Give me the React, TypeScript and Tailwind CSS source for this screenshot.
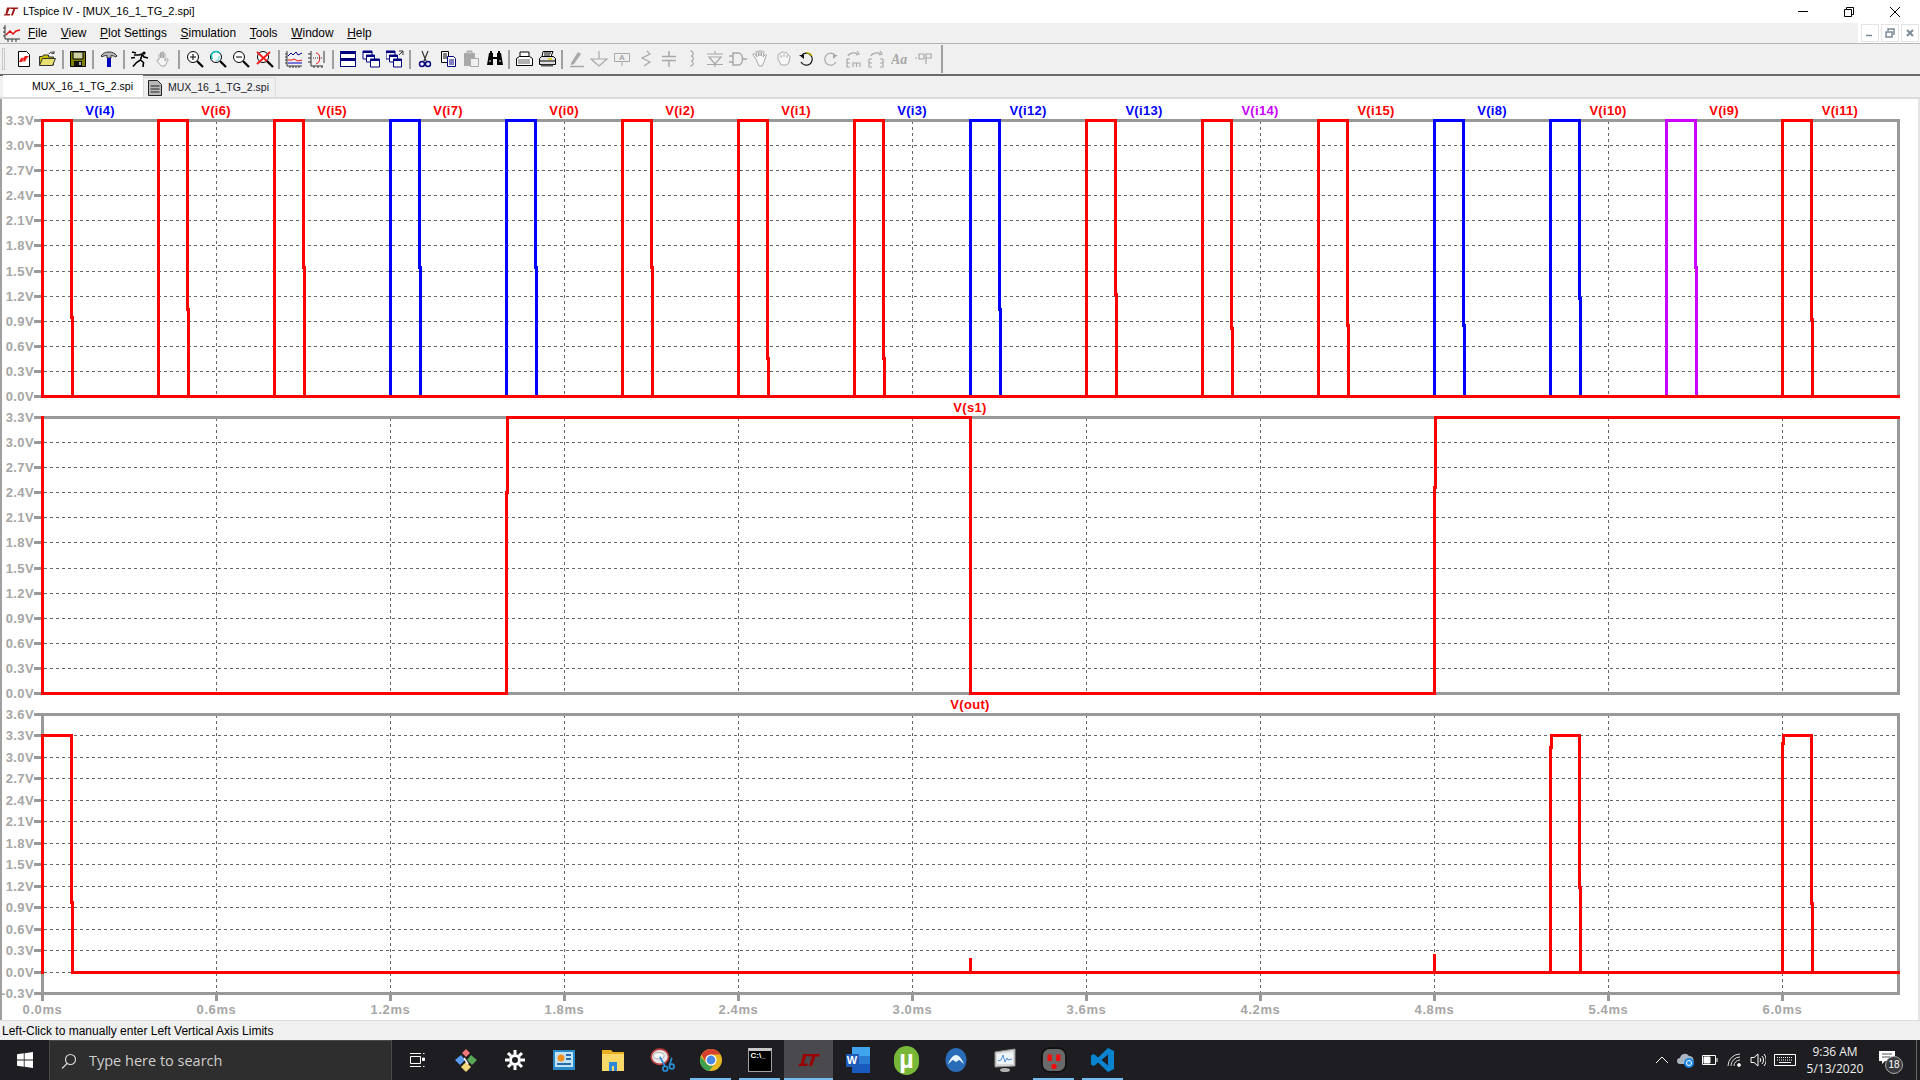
import type { ReactNode } from "react";

const NAVY = "#000080";
const GREY = "#a6a6a6";
const AXIS = "#999999";
const RED = "#ff0000";
const BLUE = "#0000ff";
const MAGENTA = "#cc00ff";

const X0 = 42.5;
const PERIOD = 116;

const pulses = [
  { color: RED, kink: 317 },
  { color: RED, kink: 309 },
  { color: RED, kink: 267 },
  { color: BLUE, kink: 267 },
  { color: BLUE, kink: 267 },
  { color: RED, kink: 267 },
  { color: RED, kink: 358 },
  { color: RED, kink: 358 },
  { color: BLUE, kink: 309 },
  { color: RED, kink: 294 },
  { color: RED, kink: 328 },
  { color: RED, kink: 325 },
  { color: BLUE, kink: 325 },
  { color: BLUE, kink: 298 },
  { color: MAGENTA, kink: 267 },
  { color: RED, kink: 319 },
];

const topLabels = [
  { text: "V(i4)", color: BLUE },
  { text: "V(i6)", color: RED },
  { text: "V(i5)", color: RED },
  { text: "V(i7)", color: RED },
  { text: "V(i0)", color: RED },
  { text: "V(i2)", color: RED },
  { text: "V(i1)", color: RED },
  { text: "V(i3)", color: BLUE },
  { text: "V(i12)", color: BLUE },
  { text: "V(i13)", color: BLUE },
  { text: "V(i14)", color: MAGENTA },
  { text: "V(i15)", color: RED },
  { text: "V(i8)", color: BLUE },
  { text: "V(i10)", color: RED },
  { text: "V(i9)", color: RED },
  { text: "V(i11)", color: RED },
];

const panels = [
  { top: 120.5, bottom: 396.5, steps: 11, max: 3.3 },
  { top: 417.5, bottom: 693.5, steps: 11, max: 3.3 },
  { top: 714.5, bottom: 993.5, steps: 13, max: 3.6 },
];

const menus = [
  ["F", "ile"],
  ["V", "iew"],
  ["P", "lot Settings"],
  ["S", "imulation"],
  ["T", "ools"],
  ["W", "indow"],
  ["H", "elp"],
];

const Ico = ({ children }: { children: ReactNode }) => (
  <svg viewBox="0 0 18 18" fill="none" className="w-[18px] h-[18px]" strokeWidth="1">
    {children}
  </svg>
);

const Lens = ({ children }: { children?: ReactNode }) => (
  <Ico>
    <circle cx="7" cy="7" r="5.5" fill="#fff" stroke="#000" />
    {children}
    <path d="M11 11l6 6" stroke="#000" strokeWidth="2.2" />
  </Ico>
);

const LtMark = ({ fill }: { fill: string }) => (
  <path
    d="M5 1h5l-.6 1.5H8L5.5 9H9L8.5 11H1l.5-1.5 1.5-.2zM10 1h9l-.6 2h-3L12.5 11h-2.6l2.9-8h-3.3z"
    fill={fill}
  />
);

const group1: ReactNode[] = [
  <Ico key="new">
    <path d="M3.5 1.5h8l3 3v12h-11z" fill="#fff" stroke="#000" />
    <path d="M4 12l2-4 2-.5-1 2 3-3.5h4l-2 2-2 3.5h-2l1-3-2 3.5z" fill="#f01818" />
  </Ico>,
  <Ico key="open">
    <path d="M1.5 6.5h3l1-1.5h5v2h5v8h-14z" fill="#c8c000" stroke="#333" />
    <path d="M1.5 15.5l3-7h13l-3 7z" fill="#e8e070" stroke="#333" />
    <path d="M11 4c1-2 3-2.500 4.500-1.500M16 1v2.500h-2.500" stroke="#333" />
  </Ico>,
];

const group2: ReactNode[] = [
  <Ico key="save">
    <path d="M1.500 1.500h15v15h-15z" fill="#808000" stroke="#000" />
    <path d="M4 2h10v7H4z" fill="#d0d0a0" stroke="#000" />
    <path d="M5 11h8v5H5z" fill="#111" />
    <path d="M10 12h2v3h-2z" fill="#b0b0b0" />
  </Ico>,
];

const group3: ReactNode[] = [
  <Ico key="hammer">
    <path d="M1 6c2-3 5-4 8-4s6 1 8 4l-1 1c-2-1-4-1.500-5-1.500V8H7V5.500C5 5.500 3 6 2 7z" fill="#b8b8b8" stroke="#333" />
    <path d="M7 8h4v9H7z" fill="#0000c0" />
  </Ico>,
];

const group4: ReactNode[] = [
  <Ico key="run">
    <circle cx="13" cy="3" r="1.600" fill="#000" />
    <path d="M3 5h5l3-1 2 3 4 1M11 5l-1.500 5-4 2.500-3.500 4M9.500 10l3 2.500-.5 4.500M1 2l4 1M0 8l4-.5" stroke="#000" strokeWidth="1.600" />
  </Ico>,
  <Ico key="hand">
    <path d="M5 10V5c0-1 1.500-1 1.500 0v3-5c0-1 1.500-1 1.500 0v5-5.500c0-1 1.500-1 1.500 0V8V4c0-1 1.500-1 1.500 0v7l1.500-2c1-1 2 0 1.500 1l-3 6H7l-4-5c-.5-1 .5-2 1.500-1z" fill="#f4f4f4" stroke="#a8a8a8" />
  </Ico>,
];

const group5: ReactNode[] = [
  <Lens key="zin">
    <path d="M4 7h6M7 4v6" stroke="#000" />
  </Lens>,
  <Lens key="zfit">
    <path d="M3.500 9a4.500 4.500 0 0 1 7-6" stroke="#00c8c8" strokeWidth="1.500" />
    <path d="M10 6a4 4 0 0 1-3 5" stroke="#80e0e0" strokeWidth="1.500" />
  </Lens>,
  <Lens key="zout">
    <path d="M4 7h6" stroke="#000" />
  </Lens>,
  <Lens key="zcancel">
    <path d="M1 2l13 12M14 2L1 14" stroke="#f01818" strokeWidth="1.800" />
  </Lens>,
];

const group6: ReactNode[] = [
  <Ico key="plot">
    <path d="M2 1v15h15M0 4h2M0 7h2M0 10h2M0 13h2M5 16v2M8 16v2M11 16v2M14 16v2" stroke="#333" />
    <path d="M3 6l3-3 2 2 3-3 2 3 4-2" stroke={NAVY} />
    <path d="M3 10h4l2-1 4 2 4-1" stroke="#e01010" />
    <path d="M3 13h14" stroke="#0000c0" />
  </Ico>,
  <Ico key="curve">
    <path d="M3 1v15h12M0 4h3M0 8h3M0 12h3M6 16v2M10 16v2M14 16v2M16 1v12" stroke="#333" />
    <path d="M8 3c5 0 5 10 0 11" stroke="#e01010" />
    <path d="M5 8h9" stroke="#333" strokeDasharray="1 1" />
  </Ico>,
];

const group7: ReactNode[] = [
  <Ico key="tile">
    <path d="M1 1h16v16H1z" fill={NAVY} />
    <path d="M2 4h14v4H2zM2 11h14v5H2z" fill="#fff" />
  </Ico>,
  <Ico key="cascade">
    <path d="M1 1h9v8H1z" fill="#fff" stroke={NAVY} />
    <path d="M1 1h9v2H1z" fill={NAVY} />
    <path d="M4.500 5h8v7h-8z" fill="#fff" stroke={NAVY} />
    <path d="M4.500 5h8v2h-8z" fill={NAVY} />
    <path d="M8.500 9h9v8h-9z" fill="#fff" stroke={NAVY} />
    <path d="M8.500 9h9v2h-9z" fill={NAVY} />
  </Ico>,
  <Ico key="cascade2">
    <path d="M0 1h9v8H0z" fill="#fff" stroke={NAVY} />
    <path d="M0 1h9v2H0z" fill={NAVY} />
    <path d="M3.500 5h8v7h-8z" fill="#fff" stroke={NAVY} />
    <path d="M3.500 5h8v2h-8z" fill={NAVY} />
    <path d="M7.500 9h8v8h-8z" fill="#fff" stroke={NAVY} />
    <path d="M7.500 9h8v2h-8z" fill={NAVY} />
    <path d="M13 1h4v4M17 1l-4 4" stroke="#333" />
  </Ico>,
];

const group8: ReactNode[] = [
  <Ico key="cut">
    <path d="M6 1l4 10M12 1L8 11" stroke="#333" strokeWidth="1.200" />
    <circle cx="6" cy="14" r="2.500" stroke={NAVY} strokeWidth="1.400" />
    <circle cx="12" cy="14" r="2.500" stroke={NAVY} strokeWidth="1.400" />
  </Ico>,
  <Ico key="copy">
    <path d="M2.500 1.500h7v11h-7z" fill="#fff" stroke="#000" />
    <path d="M4 4h4M4 6h4M4 8h4" stroke="#000" />
    <path d="M8.500 6.500h6l2 2v8h-8z" fill="#fff" stroke={NAVY} />
    <path d="M10 10h5M10 12h5M10 14h5" stroke={NAVY} />
  </Ico>,
  <Ico key="paste">
    <path d="M2 3h11v13H2z" fill="#a8a8a8" />
    <path d="M5 1h5v3H5z" fill="#c8c8c8" stroke="#a8a8a8" />
    <path d="M8.500 8.500h8v8h-8z" fill="#f0f0f0" stroke="#a8a8a8" />
  </Ico>,
  <Ico key="find">
    <path d="M3 3h4v4h4V3h4l2 12h-6V9H7v6H1z" fill="#000" />
    <path d="M3 11h2M13 11h2" stroke="#fff" />
    <path d="M4 1h2v3H4zM12 1h2v3h-2z" fill="#000" />
  </Ico>,
];

const group9: ReactNode[] = [
  <Ico key="preview">
    <path d="M5 2h9v5H5z" fill="#fff" stroke="#000" />
    <path d="M1.500 8.500l3-2h10l3 2v7h-16z" fill="#fff" stroke="#000" />
    <path d="M3 9h12v5H3z" fill="#b0b0b0" />
  </Ico>,
  <Ico key="print">
    <path d="M5 1.500h10l-2 5H4z" fill="#fff" stroke="#000" />
    <path d="M6 3h7M6 5h6" stroke="#000" />
    <path d="M1.500 8.500l2-2h12l2 2v6h-16z" fill="#e0e0e0" stroke="#000" />
    <path d="M1 11h16" stroke="#000" />
    <path d="M10 9h4" stroke="#e0d000" strokeWidth="1.500" />
    <path d="M3 14.500h12v2H3z" fill="#555" />
  </Ico>,
];

const d = "#a8a8a8";
const group10: ReactNode[] = [
  <Ico key="pencil">
    <path d="M4 13L11 2l3 2-7 10-3 1z" fill={d} />
    <path d="M3 16.500h14" stroke={d} strokeWidth="1.500" />
  </Ico>,
  <Ico key="gnd">
    <path d="M9 1v8M1 9h16L9 16z" stroke={d} strokeWidth="1.200" />
  </Ico>,
  <Ico key="label">
    <path d="M1.500 3.500h15v8h-15zM9 12v4" stroke={d} />
    <text x="9" y="10" textAnchor="middle" className="text-[8px] font-bold fill-[#a8a8a8]">A</text>
  </Ico>,
  <Ico key="res">
    <path d="M10 1l3 3-8 4 8 4-6 4" stroke={d} strokeWidth="1.200" />
  </Ico>,
  <Ico key="cap">
    <path d="M9 1v5M2 6.500h14M2 10.500h14M9 11v6" stroke={d} strokeWidth="1.500" />
  </Ico>,
  <Ico key="ind">
    <path d="M7 1c4 0 4 5 1 5 3 0 3 5 0 5 3 0 3 5-1 5" stroke={d} strokeWidth="1.200" />
  </Ico>,
  <Ico key="diode">
    <path d="M1 4h16M3 7h12L9 14zM1 14.500h16M9 1v3M9 14v3" stroke={d} strokeWidth="1.200" />
  </Ico>,
  <Ico key="gate">
    <path d="M4 3h5c6 0 6 12 0 12H4zM0 6h4M0 12h4M14 9h4" stroke={d} strokeWidth="1.500" />
  </Ico>,
  <Ico key="handa">
    <path d="M4 9L1 5c-1-1 1-2 2-1l2 3-1-5c0-1 2-1 2 0l1 4V1c0-1 2-1 2 0v5l1-4c0-1 2-1 2 0l-1 5 2-2c1-1 2 0 1 1l-2 6-2 4H7z" fill="#f8f8f8" stroke={d} />
  </Ico>,
  <Ico key="fist">
    <path d="M3 9V5c0-1 2-1 2-1s0-2 2-2 2 1 2 1 2-1 3 0 1 2 1 2 2 0 2 2l-1 5-2 3H6z" fill="#f8f8f8" stroke={d} />
    <path d="M6 5v3M9 4v3M12 5v3" stroke={d} />
  </Ico>,
  <Ico key="undo">
    <path d="M4 5a6 6 0 1 1-1 7" stroke="#111" strokeWidth="1.200" />
    <path d="M8 3a6 6 0 0 1 6 3" stroke="#c8b400" strokeWidth="1.200" />
    <path d="M1 5h5v4z" fill="#111" />
  </Ico>,
  <Ico key="redo">
    <path d="M14 5a6 6 0 1 0 1 7" stroke={d} strokeWidth="1.200" />
    <path d="M17 5h-5v4z" fill={d} />
  </Ico>,
  <Ico key="move">
    <path d="M3 9h3M3 9v8h3M3 13h3M9 17v-4h7v4M12.500 13v4M4 6c1-3 7-4 9-2M13 1l2 3-3 1" stroke={d} strokeWidth="1.200" />
  </Ico>,
  <Ico key="drag">
    <path d="M2 9h3M2 9v8h3M2 13h3M16 9h-3M16 9v8h-3M16 13h-3M4 6c1-3 7-4 9-2M13 1l2 3-3 1" stroke={d} strokeWidth="1.200" />
  </Ico>,
  <Ico key="text">
    <text x="0" y="14" className="text-[14px] italic font-bold fill-[#a8a8a8] [font-family:'Liberation_Serif',serif]">Aa</text>
  </Ico>,
  <Ico key="op">
    <path d="M1 8h2M5 4h5v5H5zM12 4h5v4h-5zM12 8v6" stroke={d} strokeWidth="1.200" />
  </Ico>,
];

const toolGroups = [
  { icons: group1, sep: "", button: "w-[23.4px]" },
  { icons: group2, sep: "w-[7.5px]", button: "w-[23.4px]" },
  { icons: group3, sep: "w-[7.5px]", button: "w-[23.4px]" },
  { icons: group4, sep: "w-[7.5px]", button: "w-[23.4px]" },
  { icons: group5, sep: "w-[8px]", button: "w-[23.4px]" },
  { icons: group6, sep: "w-[6px]", button: "w-[23.4px]" },
  { icons: group7, sep: "w-[7px]", button: "w-[23.4px]" },
  { icons: group8, sep: "w-[6.5px]", button: "w-[23.4px]" },
  { icons: group9, sep: "w-[5.5px]", button: "w-[23.4px]" },
  { icons: group10, sep: "w-[6px]", button: "w-[23.1px]" },
];

const Toolbar = () => (
  <div className="h-[31px] bg-[#f0f0f0] border-t border-[#b4b4b4] flex items-center pl-[2px]">
    <div className="w-[3px] h-[22px] border border-[#c8c8c8] mr-[7px]" />
    {toolGroups.map((group, i) => (
      <div key={i} className="flex items-center">
        {group.sep && (
          <div className={`${group.sep} h-[19px] flex justify-center`}>
            <div className="w-[2px] h-full bg-[#a0a0a0]" />
          </div>
        )}
        {group.icons.map((icon, j) => (
          <div key={j} className={`${group.button} flex justify-center`}>
            {icon}
          </div>
        ))}
      </div>
    ))}
    <div className="ml-[7px] w-[2px] h-[28px] bg-[#a0a0a0]" />
  </div>
);

const Wave = ({ d: path, color }: { d: string; color: string }) => (
  <path d={path} stroke={color} strokeWidth="3" fill="none" strokeLinejoin="miter" strokeLinecap="square" shapeRendering="crispEdges" />
);

const Plot = () => {
  const gridXs = Array.from({ length: 10 }, (_, i) => 216.5 + 174 * i);
  return (
    <svg viewBox="2 99 1916 921" className="block w-[1916px] h-[921px]">
      {panels.map((p, pi) => {
        const step = (p.bottom - p.top) / p.steps;
        return (
          <g key={pi}>
            {gridXs.map(x => (
              <path key={x} d={`M${x} ${p.top}V${p.bottom}`} stroke="#666" strokeDasharray="3 3" shapeRendering="crispEdges" />
            ))}
            {Array.from({ length: p.steps + 1 }, (_, i) => {
              const y = Math.floor(p.top + step * i) + 0.5;
              return (
                <g key={i}>
                  {i > 0 && i < p.steps && (
                    <path d={`M44 ${y}H1897`} stroke="#666" strokeDasharray="3 3" shapeRendering="crispEdges" />
                  )}
                  <path d={`M34 ${y}H42`} stroke={AXIS} strokeWidth="3" shapeRendering="crispEdges" />
                  <text x="34" y={y + 4} textAnchor="end" className="text-[13px] font-bold tracking-[0.4px]" fill={GREY}>
                    {(p.max - 0.3 * i).toFixed(1).replace("-0.0", "0.0")}V
                  </text>
                </g>
              );
            })}
            <path d={`M${X0} ${p.bottom}V${p.top}H1898.5V${p.bottom}H${X0}`} stroke={AXIS} strokeWidth="3" fill="none" shapeRendering="crispEdges" />
          </g>
        );
      })}

      {Array.from({ length: 11 }, (_, i) => {
        const x = X0 + 174 * i;
        return (
          <g key={i}>
            <path d={`M${x} 993V1001`} stroke={AXIS} strokeWidth="3" shapeRendering="crispEdges" />
            <text x={x} y="1014" textAnchor="middle" className="text-[13px] font-bold tracking-[0.6px]" fill={GREY}>
              {(0.6 * i).toFixed(1)}ms
            </text>
          </g>
        );
      })}

      {pulses.map((p, i) => {
        const rise = X0 + PERIOD * i;
        const fall = rise + 29;
        return <Wave key={i} color={p.color} d={`M${rise} 396.5V120.5H${fall}V${p.kink}H${fall + 1}V396.5`} />;
      })}
      <Wave color={RED} d={`M${X0} 396.5H1898.5`} />

      <Wave color={RED} d="M42.5 417.5V693.5H506.5V492H507.5V417.5H970.5V693.5H1434.5V487H1435.5V417.5H1898.5" />

      <Wave color={RED} d="M42.5 972.5V735.5H71.5V902H72.5V972.5H1898.5" />
      <Wave color={RED} d="M970.5 972V959M1434.5 972V955" />
      <Wave color={RED} d="M1550.5 972.5V747H1551.5V735.5H1579.5V887H1580.5V972.5" />
      <Wave color={RED} d="M1782.5 972.5V743H1783.5V735.5H1811.5V903H1812.5V972.5" />

      {topLabels.map((l, i) => (
        <text key={i} x={100 + PERIOD * i} y="114.500" textAnchor="middle" className="text-[13px] font-bold tracking-[0.3px]" fill={l.color}>
          {l.text}
        </text>
      ))}
      <text x="970" y="411.500" textAnchor="middle" className="text-[13px] font-bold tracking-[0.3px]" fill={RED}>V(s1)</text>
      <text x="970" y="709" textAnchor="middle" className="text-[13px] font-bold tracking-[0.3px]" fill={RED}>V(out)</text>
    </svg>
  );
};

const WindowControls = () => (
  <div className="flex h-full mr-[2px]">
    <div className="w-[46px] flex items-center justify-center">
      <div className="w-[10px] h-px bg-black" />
    </div>
    <div className="w-[46px] flex items-center justify-center">
      <svg viewBox="0 0 10 10" className="w-[10px] h-[10px]" fill="none" stroke="#000">
        <path d="M.5 2.500h7v7h-7zM2.500 2.500v-2h7v7h-2" />
      </svg>
    </div>
    <div className="w-[46px] flex items-center justify-center">
      <svg viewBox="0 0 10 10" className="w-[10px] h-[10px]" stroke="#000">
        <path d="M0 0l10 10M10 0L0 10" />
      </svg>
    </div>
  </div>
);

const MdiButton = ({ children }: { children: ReactNode }) => (
  <div className="w-[18px] h-[18px] bg-white border border-[#e4e4e4] flex items-center justify-center">
    <svg viewBox="0 0 10 10" className="w-[10px] h-[10px]" fill="none" stroke="#7a8a99" strokeWidth="1.500">
      {children}
    </svg>
  </div>
);

const TaskButton = ({ children, bar, active }: { children: ReactNode; bar?: boolean; active?: boolean }) => (
  <div className={`relative w-[49px] h-full flex items-center justify-center ${active ? "bg-[#4a4a4e]" : ""}`}>
    {children}
    {bar && <div className={`absolute bottom-0 h-[2px] bg-[#76b9ed] ${active ? "inset-x-0" : "inset-x-[4px]"}`} />}
  </div>
);

const TraySlot = ({ children, wide }: { children: ReactNode; wide?: boolean }) => (
  <div className={`${wide ? "w-[30px]" : "w-[24px]"} flex justify-center`}>{children}</div>
);

const Taskbar = () => (
  <div className="h-[40px] bg-[#1d1d22] flex items-center text-white">
    <div className="w-[49px] flex justify-center">
      <svg viewBox="0 0 16 16" className="w-[16px] h-[16px]" fill="#fff">
        <path d="M0 2.300l6.800-1V7.600H0zM7.600 1.200L16 0v7.600H7.600zM0 8.400h6.800v6.300L0 13.700zM7.600 8.400H16V16l-8.400-1.200z" />
      </svg>
    </div>
    <div className="w-[343px] h-full bg-[#2e2e2e] border border-[#4a4a4a] border-b-0 flex items-center pl-[11px]">
      <svg viewBox="0 0 16 16" className="w-[16px] h-[16px]" fill="none" stroke="#e0e0e0" strokeWidth="1.100">
        <circle cx="9.500" cy="6.500" r="5" />
        <path d="M6 10.500L1 15.500" />
      </svg>
      <span className="ml-[12px] text-[14.500px] text-[#cfcfcf] [font-family:'Open_Sans',sans-serif]">Type here to search</span>
    </div>

    <TaskButton>
      <svg viewBox="0 0 16 16" className="w-[16px] h-[16px]" fill="none" stroke="#fff">
        <path d="M1.500 4.500h10v7h-10zM1 1.500h11M1 14.500h11" />
        <path d="M13.500 6h2v2.500h-2z" fill="#fff" />
        <path d="M14 1.500h1.500M14 14.500h1.500" />
      </svg>
    </TaskButton>
    <TaskButton>
      <svg viewBox="0 0 24 24" className="w-[24px] h-[24px]">
        <path d="M12 1l4 4-4 4-4-4z" fill="#f07878" />
        <path d="M7 7l4 5-5 5-5-5z" fill="#5a9cf0" />
        <path d="M12 14l5 5-5 5-5-5z" fill="#f0d878" />
        <path d="M17 7l6 5-5 5-5-5z" fill="#58a858" />
        <path d="M10 10l4 6" stroke="#fff" strokeWidth="1.500" />
      </svg>
    </TaskButton>
    <TaskButton>
      <svg viewBox="0 0 20 20" className="w-[20px] h-[20px]" fill="none" stroke="#fff">
        <circle cx="10" cy="10" r="4.500" strokeWidth="3" />
        <path d="M10 0v4M10 16v4M0 10h4M16 10h4M3 3l3 3M14 14l3 3M17 3l-3 3M6 14l-3 3" strokeWidth="3" />
      </svg>
    </TaskButton>
    <TaskButton>
      <svg viewBox="0 0 22 20" className="w-[22px] h-[20px]">
        <path d="M0 0h22v20H0z" fill="#2a8ac8" />
        <path d="M2 2h18v15H2z" fill="#bfe4f8" />
        <circle cx="8" cy="8" r="3.500" fill="#f09020" />
        <path d="M13 4h5v2h-5zM13 8h5v2h-5zM4 13h14v2H4z" fill="#2a6aa8" />
      </svg>
    </TaskButton>
    <TaskButton>
      <svg viewBox="0 0 22 22" className="w-[22px] h-[22px]">
        <path d="M0 1h9l2 2h11v19H0z" fill="#e8b020" />
        <path d="M0 5h22v17H0z" fill="#f8d868" />
        <path d="M7 13h8v9H7z" fill="#2a88d8" />
        <path d="M10 17h2v5h-2z" fill="#f8d868" />
      </svg>
    </TaskButton>
    <TaskButton>
      <svg viewBox="0 0 24 24" className="w-[26px] h-[26px]">
        <ellipse cx="10" cy="9" rx="8" ry="7" fill="#e8e8e8" stroke="#c04040" strokeWidth="1.500" />
        <ellipse cx="9" cy="8" rx="5" ry="3" fill="#f8f8f8" stroke="#b0b0b0" />
        <circle cx="15" cy="20" r="2.200" fill="none" stroke="#2a90d8" strokeWidth="1.500" />
        <circle cx="21" cy="18" r="2.200" fill="none" stroke="#2a90d8" strokeWidth="1.500" />
        <path d="M10 9l5 9M21 10l-2 7" stroke="#2a90d8" strokeWidth="1.500" />
      </svg>
    </TaskButton>
    <TaskButton bar>
      <svg viewBox="0 0 24 24" className="w-[24px] h-[24px]">
        <circle cx="12" cy="12" r="11" fill="#e8b820" />
        <path d="M12 1a11 11 0 0 1 9.500 5.500H12A5.500 5.500 0 0 0 7.200 15L2.500 6.700A11 11 0 0 1 12 1z" fill="#d84030" />
        <path d="M1.500 8.500L7.200 15a5.500 5.500 0 0 0 7.500 2.200L10 23A11 11 0 0 1 1.500 8.500z" fill="#40a050" />
        <circle cx="12" cy="12" r="5" fill="#4a88e8" stroke="#fff" strokeWidth="1.200" />
      </svg>
    </TaskButton>
    <TaskButton bar>
      <div className="w-[24px] h-[24px] bg-black border border-[#a0a0a0] border-t-[3px] border-t-[#c8c8c8] text-[8px] leading-[10px] font-bold pl-[2px]">C:\_</div>
    </TaskButton>
    <TaskButton bar active>
      <svg viewBox="0 0 20 12" className="w-[24px] h-[22px]">
        <LtMark fill="#9a0000" />
      </svg>
    </TaskButton>
    <TaskButton>
      <div className="relative w-[24px] h-[26px]">
        <div className="absolute left-[6px] top-0 w-[18px] h-[26px] flex flex-col">
          <div className="h-1/3 bg-[#41a5ee]" />
          <div className="h-1/3 bg-[#2b7cd3]" />
          <div className="h-1/3 bg-[#185abd]" />
        </div>
        <div className="absolute left-0 top-[7px] w-[13px] h-[13px] bg-[#1e5cb8] text-[11px] leading-[13px] font-bold text-center text-white">W</div>
      </div>
    </TaskButton>
    <TaskButton>
      <div className="relative w-[25px] h-[29px] rounded-full bg-[#78b838] text-white text-[25px] font-bold leading-[26px] text-center overflow-hidden">µ</div>
    </TaskButton>
    <TaskButton>
      <svg viewBox="0 0 22 24" className="w-[22px] h-[26px]">
        <ellipse cx="11" cy="12" rx="10.500" ry="12" fill="#2a6cb8" />
        <path d="M3 16c2-5 5-9 8-9s6 4 8 9c-3-2-4-4-5-4l-3 2-3-2c-1 0-2 2-5 4z" fill="#e8f4fc" />
      </svg>
    </TaskButton>
    <TaskButton>
      <svg viewBox="0 0 24 24" className="w-[24px] h-[26px]">
        <path d="M2 4l20-3v17l-20 1z" fill="#d8d8d8" stroke="#909090" />
        <path d="M4 6l16-2v12H4z" fill="#eef4f8" />
        <path d="M5 13l3-1 2-5 2 7 2-4 1 2 4-1" stroke="#5090d0" fill="none" />
        <ellipse cx="12" cy="22" rx="5" ry="2" fill="#b0b0b0" />
      </svg>
    </TaskButton>
    <TaskButton bar>
      <svg viewBox="0 0 24 24" className="w-[26px] h-[26px]">
        <rect x="1" y="1" width="22" height="22" rx="7" fill="#6a6a6a" stroke="#111" strokeWidth="1.500" />
        <path d="M6 7h4v6H6zM14 7h4v6h-4z" fill="#f01010" />
        <circle cx="12" cy="18" r="2.500" fill="#f01010" />
      </svg>
    </TaskButton>
    <TaskButton bar>
      <svg viewBox="0 0 24 24" className="w-[24px] h-[28px]">
        <path d="M17 0l6 3v18l-6 3L7 14.500 3 18l-3-1.500V7.500L3 6l4 3.500zM17 6.500L10.500 12l6.500 5.500z" fill="#0a84d0" />
      </svg>
    </TaskButton>

    <div className="ml-auto flex items-center h-full">
      <TraySlot>
        <svg viewBox="0 0 14 8" className="w-[14px] h-[8px]" fill="none" stroke="#fff">
          <path d="M1 7l6-6 6 6" />
        </svg>
      </TraySlot>
      <TraySlot>
        <svg viewBox="0 0 18 16" className="w-[18px] h-[16px]">
          <path d="M3 12a3 3 0 0 1 0-6 5 5 0 0 1 9-2 4 4 0 0 1 4 6v2z" fill="#a8b4c0" />
          <circle cx="12" cy="11" r="5" fill="#1e88e8" />
          <path d="M9.500 11a2.500 2.500 0 0 1 5 0M14.500 11a2.500 2.500 0 0 1-5 0" stroke="#fff" fill="none" />
        </svg>
      </TraySlot>
      <TraySlot>
        <svg viewBox="0 0 16 10" className="w-[16px] h-[10px]" fill="none" stroke="#fff">
          <path d="M.5 .5h13v9H.5z" />
          <path d="M2 2h6v6H2z" fill="#fff" />
          <path d="M15 3v4" />
        </svg>
      </TraySlot>
      <TraySlot>
        <svg viewBox="0 0 14 14" className="w-[14px] h-[14px]" fill="none" stroke="#ddd">
          <path d="M1 13A12 12 0 0 1 13 1M4 13a9 9 0 0 1 9-9M7 13a6 6 0 0 1 6-6" />
          <circle cx="12" cy="12" r="1.500" fill="#fff" />
        </svg>
      </TraySlot>
      <TraySlot>
        <svg viewBox="0 0 16 14" className="w-[16px] h-[14px]" fill="none" stroke="#fff">
          <path d="M1 4.500h3l4-3.500v12L4 9.500H1zM10 5a3 3 0 0 1 0 4M12 3a6 6 0 0 1 0 8M14 1a9 9 0 0 1 0 12" />
        </svg>
      </TraySlot>
      <TraySlot wide>
        <svg viewBox="0 0 22 12" className="w-[22px] h-[12px]" fill="none" stroke="#fff">
          <path d="M.5 .5h21v11H.5z" />
          <path d="M3 3.500h16M3 6h16" strokeDasharray="1 1" />
          <path d="M5 8.500h12" />
        </svg>
      </TraySlot>
      <div className="w-[70px] flex flex-col items-center text-[12px] leading-[17px] text-[#f0f0f0] [font-family:'Open_Sans',sans-serif]">
        <span>9:36 AM</span>
        <span>5/13/2020</span>
      </div>
      <div className="relative w-[18px] h-[18px] ml-[9px] mr-[19px]">
        <svg viewBox="0 0 16 14" className="w-[16px] h-[14px]">
          <path d="M0 0h16v10H6l-3 3v-3H0z" fill="#fff" />
          <path d="M3 3h10M3 6h8" stroke="#555" />
        </svg>
        <div className="absolute left-[6px] top-[5px] w-[18px] h-[18px] rounded-full bg-[#3a3a3e] border border-[#aaa] text-[10px] leading-[16px] text-center text-white">18</div>
      </div>
      <div className="w-px h-full bg-[#666]" />
      <div className="w-[3px]" />
    </div>
  </div>
);

export default function App() {
  return (
    <div className="w-[1920px] h-[1080px] flex flex-col overflow-hidden bg-white text-black [font-family:'Liberation_Sans',Arial,sans-serif]">
      <div className="h-[23px] flex items-center justify-between bg-white">
        <div className="flex items-center">
          <svg viewBox="0 0 20 12" className="w-[16px] h-[11px] ml-[3px] mr-[4px]">
            <LtMark fill="#a01818" />
          </svg>
          <span className="text-[11px]">LTspice IV - [MUX_16_1_TG_2.spi]</span>
        </div>
        <WindowControls />
      </div>

      <div className="h-[20px] flex items-center bg-[#f0f0f0]">
        <svg viewBox="0 0 18 18" className="w-[18px] h-[18px] ml-[3px] mr-[7px]" fill="none">
          <path d="M2 1v14h15M0 4h2M0 8h2M0 12h2M5 15v3M9 15v3M13 15v3" stroke="#333" />
          <path d="M3 11l4-4 3 3 3-3 4-1" stroke="#e01010" strokeWidth="1.500" />
        </svg>
        <div className="flex gap-[13.7px] text-[11.9px] pt-px">
          {menus.map(([a, b]) => (
            <span key={a}>
              <span className="underline">{a}</span>
              {b}
            </span>
          ))}
        </div>
        <div className="ml-auto h-full bg-white flex items-center gap-[2px] pl-[3px] pr-px">
          <MdiButton>
            <path d="M1 7.500h6" />
          </MdiButton>
          <MdiButton>
            <path d="M1 4h6v5H1zM3 3V1h6v5H8" />
          </MdiButton>
          <MdiButton>
            <path d="M2 2l6 6M8 2L2 8" strokeWidth="2" />
          </MdiButton>
        </div>
      </div>

      <Toolbar />
      <div className="h-[2px] bg-[#696969]" />

      <div className="h-[23px] flex items-end bg-[#f0f0f0] pl-[3px] border-b-2 border-[#dcdcdc]">
        <div className="w-[140px] h-[22px] bg-white flex items-center pl-[29px] pt-px text-[10.5px]">MUX_16_1_TG_2.spi</div>
        <div className="w-[133px] h-[20px] mt-px border border-[#dcdcdc] border-b-0 flex items-center pl-[3px] gap-[5px] text-[10.5px] text-[#1a1a2a]">
          <svg viewBox="0 0 16 16" className="w-[16px] h-[16px]" fill="none">
            <path d="M1.500 .5h9l4 4v11h-13z" fill="#b8b8b8" stroke="#222" />
            <path d="M3.500 6h9M3.500 9h9M3.500 12h9" stroke="#222" strokeWidth="1.200" />
          </svg>
          MUX_16_1_TG_2.spi
        </div>
      </div>

      <div className="flex-1 min-h-0 bg-white border-l-2 border-l-[#a0a0a0] border-r-2 border-r-[#e4e4e4]">
        <Plot />
      </div>

      <div className="h-[20px] bg-[#f0f0f0] border-t border-[#dcdcdc] flex items-center pl-[2px] text-[12px]">
        Left-Click to manually enter Left Vertical Axis Limits
      </div>

      <Taskbar />
    </div>
  );
}
